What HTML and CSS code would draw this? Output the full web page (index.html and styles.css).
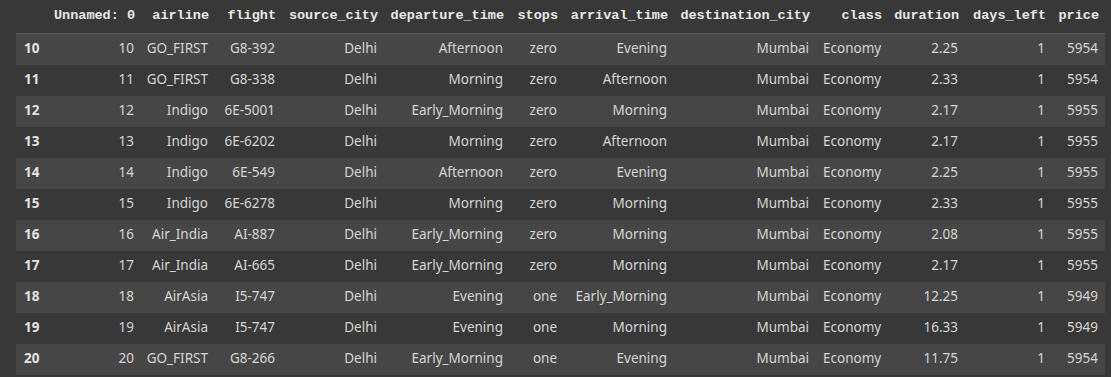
FILE: index.html
```html
<!DOCTYPE html>
<html lang="en">
<head>
  <meta charset="UTF-8">
  <title>flights.head</title>
  <link rel="stylesheet" href="styles.css">
</head>
<body>
  <div class="output-area">
    <table class="dataframe">
      <colgroup>
        <col class="c-index">
        <col class="c-unnamed">
        <col class="c-airline">
        <col class="c-flight">
        <col class="c-source">
        <col class="c-departure">
        <col class="c-stops">
        <col class="c-arrival">
        <col class="c-dest">
        <col class="c-class">
        <col class="c-duration">
        <col class="c-days">
        <col class="c-price">
      </colgroup>
      <thead>
        <tr>
          <th></th>
          <th>Unnamed: 0</th>
          <th>airline</th>
          <th>flight</th>
          <th>source_city</th>
          <th>departure_time</th>
          <th>stops</th>
          <th>arrival_time</th>
          <th>destination_city</th>
          <th>class</th>
          <th>duration</th>
          <th>days_left</th>
          <th>price</th>
        </tr>
      </thead>
      <tbody id="rows"></tbody>
    </table>
  </div>

  <script>
    // rows 10..20 of the flights dataframe
    const data = [
      [10, 'GO_FIRST', 'G8-392', 'Delhi', 'Afternoon', 'zero', 'Evening', 'Mumbai', 'Economy', '2.25', 1, 5954],
      [11, 'GO_FIRST', 'G8-338', 'Delhi', 'Morning', 'zero', 'Afternoon', 'Mumbai', 'Economy', '2.33', 1, 5954],
      [12, 'Indigo', '6E-5001', 'Delhi', 'Early_Morning', 'zero', 'Morning', 'Mumbai', 'Economy', '2.17', 1, 5955],
      [13, 'Indigo', '6E-6202', 'Delhi', 'Morning', 'zero', 'Afternoon', 'Mumbai', 'Economy', '2.17', 1, 5955],
      [14, 'Indigo', '6E-549', 'Delhi', 'Afternoon', 'zero', 'Evening', 'Mumbai', 'Economy', '2.25', 1, 5955],
      [15, 'Indigo', '6E-6278', 'Delhi', 'Morning', 'zero', 'Morning', 'Mumbai', 'Economy', '2.33', 1, 5955],
      [16, 'Air_India', 'AI-887', 'Delhi', 'Early_Morning', 'zero', 'Morning', 'Mumbai', 'Economy', '2.08', 1, 5955],
      [17, 'Air_India', 'AI-665', 'Delhi', 'Early_Morning', 'zero', 'Morning', 'Mumbai', 'Economy', '2.17', 1, 5955],
      [18, 'AirAsia', 'I5-747', 'Delhi', 'Evening', 'one', 'Early_Morning', 'Mumbai', 'Economy', '12.25', 1, 5949],
      [19, 'AirAsia', 'I5-747', 'Delhi', 'Evening', 'one', 'Morning', 'Mumbai', 'Economy', '16.33', 1, 5949],
      [20, 'GO_FIRST', 'G8-266', 'Delhi', 'Early_Morning', 'one', 'Evening', 'Mumbai', 'Economy', '11.75', 1, 5954]
    ];

    const rows = document.getElementById('rows');
    data.forEach(row => {
      const tr = document.createElement('tr');
      const th = document.createElement('th');
      th.textContent = row[0];
      tr.appendChild(th);
      row.forEach(value => {
        const td = document.createElement('td');
        td.textContent = value;
        tr.appendChild(td);
      });
      rows.appendChild(tr);
    });
  </script>
</body>
</html>
```

FILE: styles.css
```css
body {
  margin: 0;
  background-color: #383838;
  color: #d5d5d5;
  font-family: 'Noto Sans', 'Open Sans', Arial, sans-serif;
}

.output-area {
  padding: 0 6px 0 16px;
}

.dataframe {
  border-collapse: collapse;
  table-layout: fixed;
  width: 1089px;
  font-size: 13.5px;
}

.c-index { width: 31px; }
.c-unnamed { width: 94px; }
.c-airline { width: 74px; }
.c-flight { width: 67px; }
.c-source { width: 102px; }
.c-departure { width: 126px; }
.c-stops { width: 54px; }
.c-arrival { width: 110px; }
.c-dest { width: 142px; }
.c-class { width: 72px; }
.c-duration { width: 77px; }
.c-days { width: 87px; }
.c-price { width: 53px; }

.dataframe thead th {
  height: 30px;
  padding: 0 6px 3px 0;
  text-align: right;
  vertical-align: middle;
  color: #e8e8e8;
  font-family: 'Liberation Mono', 'DejaVu Sans Mono', monospace;
  font-weight: bold;
  font-size: 13.5px;
  white-space: nowrap;
  border-bottom: 1px solid #5c5c5c;
}

.dataframe tbody tr {
  height: 31px;
}

.dataframe tbody tr:nth-child(odd) {
  background-color: #464646;
}

.dataframe tbody th {
  padding: 0 0 3px 8px;
  text-align: left;
  font-weight: bold;
  color: #e4e4e4;
}

.dataframe tbody td {
  padding: 0 7px 3px 0;
  text-align: right;
  white-space: nowrap;
}

.dataframe tbody td:nth-child(10) {
  text-align: left;
  padding-left: 7px;
}
```
